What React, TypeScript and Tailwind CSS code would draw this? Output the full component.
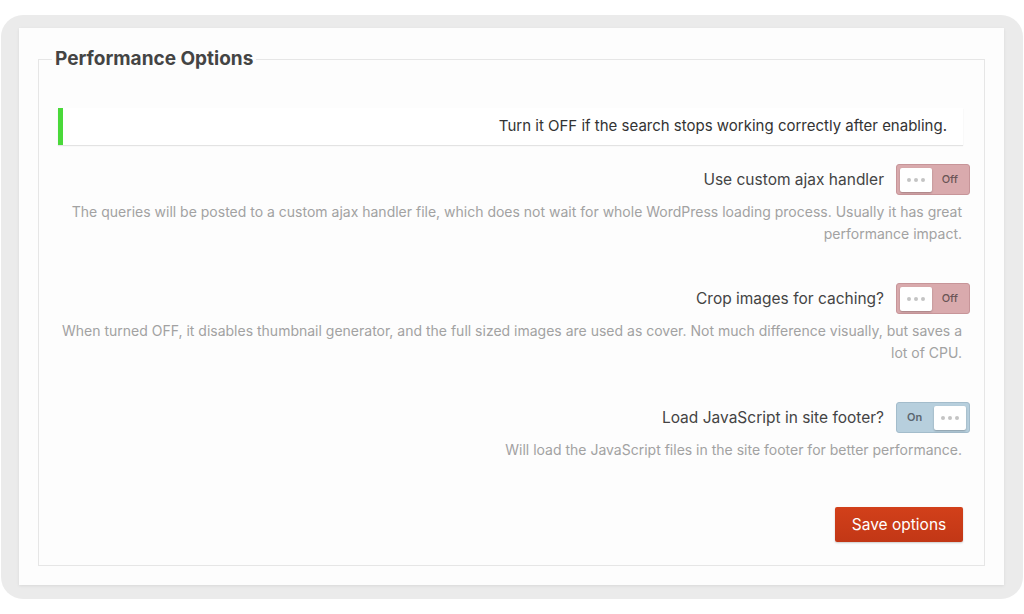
import React from 'react';

const font = { fontFamily: 'Inter, "Noto Sans", sans-serif' };

function Toggle({ on }: { on: boolean }) {
  const knob = (
    <div className="w-[32px] h-[24px] bg-white rounded-[2px] shadow-[0_1px_2px_rgba(0,0,0,0.25)] flex items-center justify-center gap-[3px]">
      <span className="w-[4px] h-[4px] rounded-full bg-[#c4c4c4]" />
      <span className="w-[4px] h-[4px] rounded-full bg-[#c4c4c4]" />
      <span className="w-[4px] h-[4px] rounded-full bg-[#c4c4c4]" />
    </div>
  );
  return on ? (
    <div className="w-[74px] h-[31px] rounded-[3px] bg-[#b7cfdd] border border-[#a3bccb] flex items-center justify-between pl-[10px] pr-[3px]">
      <span className="text-[11px] font-semibold text-[#5b6670]">On</span>
      {knob}
    </div>
  ) : (
    <div className="w-[74px] h-[31px] rounded-[3px] bg-[#d9aaad] border border-[#c79599] flex items-center justify-between pl-[3px] pr-[11px]">
      {knob}
      <span className="text-[11px] font-medium text-[#6b5556]">Off</span>
    </div>
  );
}

function Row({ label, on, lines }: { label: string; on: boolean; lines: string[] }) {
  return (
    <div className="flex flex-col items-end">
      <div className="flex items-center gap-[12px]">
        <span className="text-[15.5px] text-[#444]">{label}</span>
        <Toggle on={on} />
      </div>
      <div className="mr-[8px] mt-[6px] text-right text-[14px] leading-[22px] text-[#a2a2a2]">
        {lines.map((l, i) => (
          <div key={i} className="whitespace-nowrap">{l}</div>
        ))}
      </div>
    </div>
  );
}

export default function App() {
  return (
    <div className="w-full h-[614px] bg-white pt-[15px] pl-[1px]" style={font}>
      <div className="w-[1022px] h-[584px] rounded-[22px] bg-[#ebebeb] pt-[13px] pl-[18px] pr-[19px] pb-[14px]">
        <div className="w-full h-full bg-[#fdfdfd] shadow-[0_1px_3px_rgba(0,0,0,0.08)] pt-[19px] px-[19px] pb-[19px]">
          <fieldset className="w-full min-w-0 h-full border border-[#e6e6e6] pl-[13px] pr-[14px] pb-[22px]">
            <legend className="px-[3px] text-[19px] font-bold text-[#444] leading-[24px]">Performance Options</legend>
            <div className="pt-[37px] pl-[6px] flex flex-col">
              <div className="mr-[7px] h-[37px] bg-white border-l-[5px] border-[#4ad93a] shadow-[0_1px_1px_rgba(0,0,0,0.1)] flex items-center justify-end pr-[16px]">
                <span className="text-[15px] text-[#333]">Turn it OFF if the search stops working correctly after enabling.</span>
              </div>
              <div className="mt-[19px] flex flex-col gap-[38px]">
                <Row
                  label="Use custom ajax handler"
                  on={false}
                  lines={[
                    'The queries will be posted to a custom ajax handler file, which does not wait for whole WordPress loading process. Usually it has great',
                    'performance impact.',
                  ]}
                />
                <Row
                  label="Crop images for caching?"
                  on={false}
                  lines={[
                    'When turned OFF, it disables thumbnail generator, and the full sized images are used as cover. Not much difference visually, but saves a',
                    'lot of CPU.',
                  ]}
                />
                <Row
                  label="Load JavaScript in site footer?"
                  on={true}
                  lines={['Will load the JavaScript files in the site footer for better performance.']}
                />
              </div>
              <div className="flex justify-end mt-[46px] mr-[7px]">
                <button className="w-[128px] h-[35px] rounded-[2px] bg-gradient-to-b from-[#d2401a] to-[#c23716] text-white text-[15.5px] shadow-[0_1px_2px_rgba(0,0,0,0.2)]">
                  Save options
                </button>
              </div>
            </div>
          </fieldset>
        </div>
      </div>
    </div>
  );
}
